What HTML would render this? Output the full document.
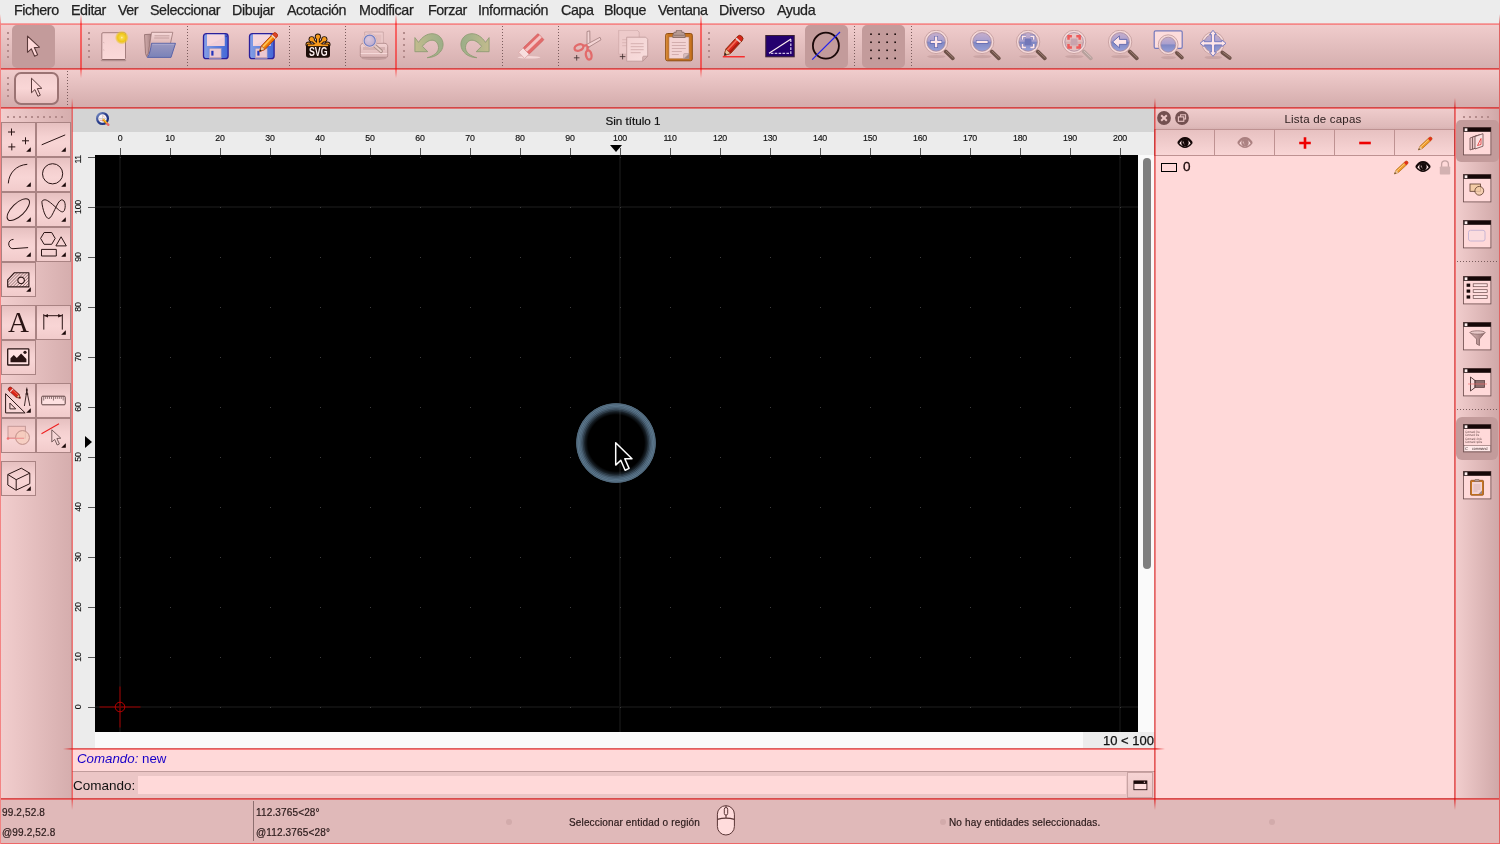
<!DOCTYPE html><html lang="es"><head><meta charset="utf-8"><title>Sin título 1 - QCAD</title><style>
*{box-sizing:border-box;margin:0;padding:0}
html,body{width:1500px;height:844px;overflow:hidden;background:#ececec;font-family:"Liberation Sans",sans-serif;color:#000}
.abs,.abs>*{position:absolute}
#root{position:relative;width:1500px;height:844px;overflow:hidden;will-change:transform}
#root div,#root span,#root svg{position:absolute}
.menu{top:0;left:0;width:1500px;height:24px;background:#ececec}
.menu span{top:2px;font-size:14.300px;line-height:16px;color:#222;white-space:nowrap;letter-spacing:-.42px;-webkit-text-stroke:.25px #222}
.tb1{left:0;top:24px;width:1500px;height:45px;background:linear-gradient(#f1cdcd,#d4aeae)}
.tb2{left:0;top:69px;width:1500px;height:39px;background:linear-gradient(#f1cdcd,#d3abab)}
.ltb{left:0;top:108px;width:72px;height:690px;background:linear-gradient(90deg,#f2cece,#d5adad)}
.rtb{left:1455px;top:108px;width:45px;height:690px;background:linear-gradient(90deg,#f2cece,#cfa7a7)}
.status{left:0;top:798px;width:1500px;height:46px;background:#e0b9b9}
.status span{font-size:10px;line-height:12px;color:#2a1a1a;white-space:nowrap;letter-spacing:.15px;-webkit-text-stroke:.2px #2a1a1a}
.hl{background:#ff0000;opacity:.5;height:2px}
.vl{background:#ff0000;opacity:.5;width:2px}
.pressed{background:#c39b9b;border-radius:5px}
.sepv{width:1px;background-image:linear-gradient(#7a5c5c 1px,transparent 1px);background-size:1px 3px}
.seph{height:1px;background-image:linear-gradient(90deg,#7a5c5c 1px,transparent 1px);background-size:3px 1px}
.grip{width:2px;background-image:linear-gradient(#b38b8b 2px,transparent 2px);background-size:2px 6px}
.griph{height:2px;background-image:linear-gradient(90deg,#b38b8b 2px,transparent 2px);background-size:6px 2px}
.cadbtn{width:35px;height:35px;border:.9px solid #a98383;background:linear-gradient(#e6c0c0,#f5d1d1 40%,#f8d5d5 60%,#f1cbcb);}
.tri{width:4.600px;height:4.600px;background:#1a0808;clip-path:polygon(100% 0,100% 100%,0 100%)}
.doc{left:72px;top:108px;width:1083px;height:640px;background:#fafafa}
.tabbar{left:0;top:0;width:1083px;height:24px;background:#d4d4d4}
.hruler{left:0;top:24px;width:1083px;height:23px;background:#ececec}
.vruler{left:0;top:47px;width:23px;height:593px;background:#ececec;overflow:hidden}
.canvas{left:23px;top:47px;width:1043px;height:577px;background:#000;overflow:hidden}
.rl{font-size:9.400px;color:#111;white-space:nowrap;line-height:12px;letter-spacing:-.3px;transform:scaleX(.94);-webkit-text-stroke:.15px #111}
.cmdhist{left:72px;top:749px;width:1083px;height:22px;background:#ffd9d9}
.cmdline{left:72px;top:771px;width:1083px;height:27px;background:#ebc6c6}
.lay{left:1156px;top:108px;width:298px;height:690px;background:#ffd9d9}
.laytitle{left:0;top:0;width:298px;height:22px;background:linear-gradient(#f0cdcd,#deb9b9 85%,#d4afaf)}
.laybtn{top:20.600px;height:27.900px;width:60.600px;border:1.300px solid #be9292;background:linear-gradient(#e7c1c1,#f9d6d6)}
.rbtn{left:8px;width:29px;height:29px}
</style></head><body><div id="root">
<div class="menu">
<span style="left:14px">Fichero</span>
<span style="left:71px">Editar</span>
<span style="left:118px">Ver</span>
<span style="left:150px">Seleccionar</span>
<span style="left:232px">Dibujar</span>
<span style="left:287px">Acotación</span>
<span style="left:359px">Modificar</span>
<span style="left:428px">Forzar</span>
<span style="left:478px">Información</span>
<span style="left:561px">Capa</span>
<span style="left:604px">Bloque</span>
<span style="left:658px">Ventana</span>
<span style="left:719px">Diverso</span>
<span style="left:777px">Ayuda</span>
</div>
<div class="tb1">
<div class="grip" style="left:7px;top:8px;height:28px"></div>
<div class="pressed" style="left:12px;top:1px;width:43px;height:43px"></div>
<div class="grip" style="left:88px;top:8px;height:28px"></div>
<div class="grip" style="left:403px;top:8px;height:28px"></div>
<div class="grip" style="left:708px;top:8px;height:28px"></div>
<div class="sepv" style="left:187px;top:2px;height:41px"></div>
<div class="sepv" style="left:289px;top:2px;height:41px"></div>
<div class="sepv" style="left:345px;top:2px;height:41px"></div>
<div class="sepv" style="left:502px;top:2px;height:41px"></div>
<div class="sepv" style="left:558px;top:2px;height:41px"></div>
<div class="sepv" style="left:854px;top:2px;height:41px"></div>
<div class="sepv" style="left:911px;top:2px;height:41px"></div>
<div class="pressed" style="left:805px;top:1px;width:43px;height:43px"></div>
<div class="pressed" style="left:862px;top:1px;width:43px;height:43px"></div>
<svg style="left:17.0px;top:6.0px" width="32" height="32" viewBox="0 0 32 32"><path d="M10.5 6.2V22.3L14.3 18.8L17.6 26.2L20.6 24.8L17.3 17.6L22.4 17.2Z" fill="#ffd9d9" stroke="#5a3a3a" stroke-width="1.1" stroke-linejoin="round"/></svg>
<svg style="left:97.0px;top:6.0px" width="32" height="32" viewBox="0 0 32 32"><defs><radialGradient id="gy"><stop offset="0" stop-color="#fff3c8"/><stop offset=".18" stop-color="#f7d84a"/><stop offset=".6" stop-color="#efc618"/><stop offset=".8" stop-color="#ecc428" stop-opacity=".6"/><stop offset="1" stop-color="#e8c83a" stop-opacity="0"/></radialGradient><linearGradient id="gpg" x1="0" y1="0" x2="0" y2="1"><stop offset="0" stop-color="#f3cfcf"/><stop offset="1" stop-color="#fbd9d9"/></linearGradient></defs><path d="M4.500 30.500h24" stroke="#9c7a7a" stroke-width="1.500" opacity=".55" stroke-linecap="round"/><rect x="4.800" y="2.700" width="23.700" height="27" rx="1.200" fill="url(#gpg)" stroke="#a57f7f" stroke-width="1"/><path d="M5.300 29.500h22.700" stroke="#8c6868" stroke-width="1"/><path d="M6.300 12.400l1 .4M6.300 19.800l1 .4" stroke="#c7a3a3" stroke-width=".7"/><circle cx="24.800" cy="7.600" r="7" fill="url(#gy)"/></svg>
<svg style="left:144.0px;top:6.0px" width="32" height="32" viewBox="0 0 32 32"><defs><linearGradient id="gfo" x1="0" y1="0" x2="0" y2="1"><stop offset="0" stop-color="#9b98c0"/><stop offset="1" stop-color="#7a82b8"/></linearGradient><linearGradient id="gfp" x1="0" y1="0" x2="0" y2="1"><stop offset="0" stop-color="#f7d9d9"/><stop offset=".45" stop-color="#e2bcbc"/><stop offset="1" stop-color="#bf9797"/></linearGradient><linearGradient id="gfb" x1="0" y1="0" x2="1" y2="0"><stop offset="0" stop-color="#d2acac"/><stop offset="1" stop-color="#a98484"/></linearGradient></defs><path d="M.5 4.600l6.500-.4-2.300 18.500-2 3.800-1.200-3z" fill="url(#gfb)" stroke="#8e6a6a" stroke-width=".8" stroke-linejoin="round"/><path d="M7.600 2.300h21.200l-2.400 11.500-22 9z" fill="url(#gfp)" stroke="#9c7676" stroke-width=".8" stroke-linejoin="round"/><path d="M10.500 5.800h15M10.200 8h15" stroke="#c49e9e" stroke-width="1"/><path d="M7.500 13.300h24l-4.500 14.100h-23.700c2.500-3 3.500-9 4.200-14.100z" fill="url(#gfo)" stroke="#5c65a8" stroke-width="1" stroke-linejoin="round"/><path d="M8.300 14.300h22" stroke="#b3b2d6" stroke-width=".7"/></svg>
<svg style="left:200.0px;top:6.0px" width="32" height="32" viewBox="0 0 32 32"><defs><linearGradient id="gfl" x1="0" y1="0" x2="1" y2="0"><stop offset="0" stop-color="#86a0e6"/><stop offset=".5" stop-color="#5f80dd"/><stop offset="1" stop-color="#4568d6"/></linearGradient></defs><rect x="3.500" y="3.700" width="24.600" height="25" rx="2.800" fill="url(#gfl)" stroke="#2b1f9a" stroke-width="1.300"/><rect x="7" y="4.400" width="17.600" height="11.600" fill="#f6d6dc"/><path d="M7 16l17.600-9v9z" fill="#ecc8d6" opacity=".6"/><rect x="9.200" y="18.300" width="12" height="10" fill="#ecc8d0" stroke="#8a8fc4" stroke-width=".6"/><path d="M9.200 27.600h12" stroke="#c9a4b4" stroke-width="1.200"/><rect x="11.300" y="20.800" width="2.200" height="4.800" fill="#2233bb"/><rect x="25.600" y="5.600" width="1.200" height="1.500" fill="#35309a"/></svg>
<svg style="left:246.0px;top:6.0px" width="32" height="32" viewBox="0 0 32 32"><defs><linearGradient id="gfl" x1="0" y1="0" x2="1" y2="0"><stop offset="0" stop-color="#86a0e6"/><stop offset=".5" stop-color="#5f80dd"/><stop offset="1" stop-color="#4568d6"/></linearGradient></defs><rect x="3.500" y="3.700" width="24.600" height="25" rx="2.800" fill="url(#gfl)" stroke="#2b1f9a" stroke-width="1.300"/><rect x="7" y="4.400" width="17.600" height="11.600" fill="#f6d6dc"/><path d="M7 16l17.600-9v9z" fill="#ecc8d6" opacity=".6"/><rect x="9.200" y="18.300" width="12" height="10" fill="#ecc8d0" stroke="#8a8fc4" stroke-width=".6"/><path d="M9.200 27.600h12" stroke="#c9a4b4" stroke-width="1.200"/><rect x="11.300" y="20.800" width="2.200" height="4.800" fill="#2233bb"/><rect x="25.600" y="5.600" width="1.200" height="1.500" fill="#35309a"/><g transform="translate(13.500,21.600) rotate(-46.500)"><path d="M0 0l5.500-2.500h16.800a2.500 2.500 0 0 1 0 5h-16.800z" fill="#f58a0c" stroke="#b0400c" stroke-width=".9" stroke-linejoin="round"/><path d="M5.500-.900h15" stroke="#ffc860" stroke-width="1.400"/><path d="M5.500 1.500h15" stroke="#e06a08" stroke-width="1"/><path d="M20.500-2.500v5" stroke="#edd0d0" stroke-width="1.500"/><path d="M21.600-2.500h.9a2.500 2.500 0 0 1 0 5h-.9z" fill="#e0442a" stroke="#b0300c" stroke-width=".6"/><path d="M0 0l5.500-2.500v5z" fill="#ecc8a0" stroke="#b0400c" stroke-width=".6"/><path d="M0 0l2.200-1v2z" fill="#222"/></g></svg>
<svg style="left:302.0px;top:6.0px" width="32" height="32" viewBox="0 0 32 32"><g stroke-linecap="round" fill="none"><path d="M16 15.500L15.900 6.800M16 15.500L9.800 9.400M16 15.500L22.200 9.400M16 15.500H6.800M16 15.500H25.200" stroke="#201008" stroke-width="3.700"/><circle cx="15.9" cy="6.7" r="3.100" fill="#201008"/><circle cx="9.7" cy="9.3" r="3.100" fill="#201008"/><circle cx="22.3" cy="9.3" r="3.100" fill="#201008"/><circle cx="6.6" cy="14.6" r="3.100" fill="#201008"/><circle cx="25.4" cy="14.6" r="3.100" fill="#201008"/><path d="M16 15.500L15.900 6.800M16 15.500L9.800 9.400M16 15.500L22.200 9.400M16 15.500H6.800M16 15.500H25.200" stroke="#f79a1e" stroke-width="1.900"/><circle cx="15.9" cy="6.7" r="2.200" fill="#f79a1e"/><circle cx="9.7" cy="9.3" r="2.200" fill="#f79a1e"/><circle cx="22.3" cy="9.3" r="2.200" fill="#f79a1e"/><circle cx="6.6" cy="14.6" r="2.200" fill="#f79a1e"/><circle cx="25.4" cy="14.6" r="2.200" fill="#f79a1e"/></g><rect x="4" y="13.700" width="24" height="14.100" rx="2.800" fill="#1c0c08"/><path d="M5.800 15.300h20.400" stroke="#f79a1e" stroke-width="1.700"/><path d="M11 15.500l5-3.500 5 3.500z" fill="#f79a1e"/><g opacity=".995"><text x="16.200" y="26" text-anchor="middle" font-family="Liberation Sans, sans-serif" font-weight="700" font-size="12.800" fill="#fff2f2" textLength="18.600" lengthAdjust="spacingAndGlyphs">SVG</text></g></svg>
<svg style="left:358.0px;top:6.0px" width="32" height="32" viewBox="0 0 32 32"><defs><linearGradient id="gpr" x1="0" y1="0" x2="0" y2="1"><stop offset="0" stop-color="#f3d3d3"/><stop offset="1" stop-color="#dbb4b4"/></linearGradient><radialGradient id="glens" cx=".4" cy=".35" r=".7"><stop offset="0" stop-color="#dcc8dc"/><stop offset="1" stop-color="#bcaacc"/></radialGradient></defs><ellipse cx="16" cy="28.300" rx="12.500" ry="1.800" fill="#a07a7a" opacity=".4"/><path d="M6.700 2h18.600v13h-18.600z" fill="#efcdcd" stroke="#c7a2a2" stroke-width=".8"/><path d="M15.500 4.500h8v8h-8z" fill="#e3bebe"/><path d="M2.300 16.500c0-1.500 1-3 2.700-3.200h22c1.700.2 2.700 1.700 2.700 3.200v9.300a1.500 1.500 0 0 1-1.500 1.500h-24.400a1.500 1.500 0 0 1-1.500-1.500z" fill="url(#gpr)" stroke="#b08a8a" stroke-width=".9"/><path d="M5 17h22v3h-22z" fill="#d2acac" opacity=".8"/><path d="M2.800 23.500h26.400" stroke="#f7dcdc" stroke-width=".9"/><path d="M16.200 15.200l6.800 6" stroke="#a88a84" stroke-width="3.800" stroke-linecap="round"/><path d="M16.200 15.200l6.800 6" stroke="#e6cbc6" stroke-width="2" stroke-linecap="round"/><circle cx="11.700" cy="10.700" r="7.200" fill="#f0d3d3" stroke="#d3aeae" stroke-width=".7"/><circle cx="11.700" cy="10.700" r="5.600" fill="url(#glens)" stroke="#6f7fc4" stroke-width="1.100"/></svg>
<svg style="left:413.0px;top:6.0px" width="32" height="32" viewBox="0 0 32 32"><defs><linearGradient id="gun" x1="0" y1="0" x2="1" y2="0"><stop offset="0" stop-color="#c3bb8d"/><stop offset=".6" stop-color="#a9b38a"/><stop offset="1" stop-color="#9cae88"/></linearGradient></defs><path d="M1.900 7.600L5.500 12.400C9 7 14 3.700 19 3.700C26 3.700 30.300 9 30.100 14.800C29.800 22 23 27.500 14.200 27.700C21 26 25.700 22 25.500 17.500C25.300 12.500 22 10.200 19 10.200C15.500 10.200 12 13 9.400 16.300L14.800 21.700H1.900Z" fill="url(#gun)" stroke="#8f9c74" stroke-width=".9" stroke-linejoin="round"/></svg>
<svg style="left:459.0px;top:6.0px" width="32" height="32" viewBox="0 0 32 32"><g transform="translate(32,0) scale(-1,1)"><defs><linearGradient id="gun" x1="0" y1="0" x2="1" y2="0"><stop offset="0" stop-color="#c3bb8d"/><stop offset=".6" stop-color="#a9b38a"/><stop offset="1" stop-color="#9cae88"/></linearGradient></defs><path d="M1.900 7.600L5.500 12.400C9 7 14 3.700 19 3.700C26 3.700 30.300 9 30.100 14.800C29.800 22 23 27.500 14.200 27.700C21 26 25.700 22 25.500 17.500C25.300 12.500 22 10.200 19 10.200C15.500 10.200 12 13 9.400 16.300L14.800 21.700H1.900Z" fill="url(#gun)" stroke="#8f9c74" stroke-width=".9" stroke-linejoin="round"/></g></svg>
<svg style="left:515.0px;top:6.0px" width="32" height="32" viewBox="0 0 32 32"><g transform="translate(0,-2)"><ellipse cx="14" cy="29.300" rx="11.500" ry="1.300" fill="#f6dada" opacity=".9"/><g transform="translate(3.600,24.300) rotate(-44)"><rect x="0" y="0" width="6.500" height="8.600" fill="#f7dede" stroke="#d9a3a3" stroke-width=".7"/><rect x="6.500" y="0" width="20.500" height="8.600" rx=".8" fill="#e26b6b" stroke="#d25c5c" stroke-width=".7"/><rect x="6.500" y="2.400" width="20.500" height="3" fill="#f4c3c3"/></g></g></svg>
<svg style="left:570.0px;top:6.0px" width="34" height="34" viewBox="0 0 34 34"><g transform="translate(1.500,-2)"><g fill="#f3d3d3" stroke="#a98686" stroke-width=".9" stroke-linejoin="round"><path d="M15.500 3.500l2.800-.6.200 15.500-3 2.200z"/><path d="M28.500 9.300l1 2.500-12.500 7.500-2.200-2.700z"/></g><g fill="none" stroke="#e26b6b" stroke-width="2.300"><ellipse cx="7.500" cy="19.500" rx="4.600" ry="3" transform="rotate(-22 7.500 19.500)"/><ellipse cx="17.200" cy="27" rx="2.800" ry="4.600" transform="rotate(-12 17.200 27)"/><path d="M11.500 17.800l4.500-.6M15.800 22.500l.6-4.500"/></g></g><path d="M3.900 27.800h5.600M6.700 25v5.600" stroke="#3a2828" stroke-width=".8"/></svg>
<svg style="left:617.0px;top:6.0px" width="34" height="34" viewBox="0 0 34 34"><g transform="translate(-.8,-1.300)"><defs><linearGradient id="gcp" x1="0" y1="0" x2="1" y2="1"><stop offset="0" stop-color="#f3d2d2"/><stop offset="1" stop-color="#f8dddd"/></linearGradient></defs><path d="M2.500 1.500h18.500l2 2v22h-20.500z" fill="#edcaca" stroke="#cfaaaa" stroke-width=".8"/><path d="M6 11h8M6 14h8M6 17h6" stroke="#d5b0b0" stroke-width=".8"/><path d="M10.500 8.500h19l2 2v17l-5 5h-16z" fill="url(#gcp)" stroke="#c29d9d" stroke-width=".9" stroke-linejoin="round"/><path d="M31.500 27.500l-5 5v-4a1 1 0 0 1 1-1z" fill="#d9b6b6" stroke="#b79090" stroke-width=".7"/><path d="M14.500 15h13M14.500 18h13M14.500 21h13M14.500 24h10" stroke="#d3adad" stroke-width=".9"/></g><path d="M2.800 26.600h5.600M5.600 23.800v5.600" stroke="#3a2828" stroke-width=".8"/></svg>
<svg style="left:663.0px;top:6.0px" width="32" height="34" viewBox="0 0 32 34"><g transform="translate(0,-1)"><rect x="2.700" y="4.500" width="26.600" height="27.300" rx="1.800" fill="#c9741f" stroke="#8d4d12" stroke-width="1"/><path d="M3.800 5.600v25.200" stroke="#e39a4a" stroke-width=".9"/><path d="M5.800 7.800h20.400v22h-20.400z" fill="#f3d3d3" stroke="#a4622a" stroke-width=".6"/><path d="M8.800 13.500h14M8.800 16.500h14M8.800 19.500h14M8.800 22.500h10M8.800 25.500h7" stroke="#cfa8a8" stroke-width=".9"/><path d="M26.200 24.500v5.300h-5.600z" fill="#9d8686"/><path d="M20.600 29.800l5.600-5.300h-4.600a1 1 0 0 0-1 1z" fill="#d8bcbc" stroke="#a98c8c" stroke-width=".5"/><path d="M9.800 6.300l1.200-3h2.200v-1.300a.8.800 0 0 1 .8-.8h4a.8.800 0 0 1 .8.800v1.300h2.200l1.200 3v2.200h-12.400z" fill="#b79a92" stroke="#7d625c" stroke-width=".8"/><path d="M10.500 6.300h11" stroke="#8b6f68" stroke-width=".8"/></g></svg>
<svg style="left:718.0px;top:6.0px" width="32" height="32" viewBox="0 0 32 32"><path d="M4.800 26.800h22" stroke="#ff0000" stroke-width="1.100"/><g transform="translate(6.300,25.500) rotate(-47.500)"><path d="M0 0l5.800-3.200h17a3.200 3.200 0 0 1 0 6.400h-17z" fill="#d8261c" stroke="#8a2a0c" stroke-width=".9" stroke-linejoin="round"/><path d="M5.800-1.300h15.500" stroke="#f4705a" stroke-width="1.500"/><path d="M5.800 1.900h15.500" stroke="#a81a10" stroke-width="1.300"/><path d="M20.600-3.200v6.400" stroke="#e8d2d2" stroke-width="1.700"/><path d="M0 0l5.800-3.200v6.400z" fill="#e8c39a" stroke="#8a3a1c" stroke-width=".6"/><path d="M0 0l2.400-1.300v2.600z" fill="#222"/></g></svg>
<svg style="left:764.0px;top:6.0px" width="32" height="32" viewBox="0 0 32 32"><rect x="1.800" y="5.500" width="28.400" height="21.300" fill="#24006e" stroke="#3a2030" stroke-width="1"/><path d="M26.800 9.500v13.800h-21.500" fill="none" stroke="#cdbfe6" stroke-width="1.300" stroke-dasharray="2.600 1.300"/><path d="M5 23.300l22-14.300" stroke="#fff0f0" stroke-width="1.100"/></svg>
<svg style="left:810.0px;top:6.0px" width="32" height="32" viewBox="0 0 32 32"><circle cx="15.900" cy="15.700" r="13" fill="none" stroke="#1a0808" stroke-width="1.800"/><path d="M2.200 29.600l27.800-27.600" stroke="#2222ee" stroke-width="1.200"/></svg>
<svg style="left:866.0px;top:6.0px" width="32" height="32" viewBox="0 0 32 32"><rect x="4.20" y="3.40" width="1.600" height="1.600" fill="#160808"/><rect x="4.20" y="11.45" width="1.600" height="1.600" fill="#160808"/><rect x="4.20" y="19.50" width="1.600" height="1.600" fill="#160808"/><rect x="4.20" y="27.55" width="1.600" height="1.600" fill="#160808"/><rect x="12.25" y="3.40" width="1.600" height="1.600" fill="#160808"/><rect x="12.25" y="11.45" width="1.600" height="1.600" fill="#160808"/><rect x="12.25" y="19.50" width="1.600" height="1.600" fill="#160808"/><rect x="12.25" y="27.55" width="1.600" height="1.600" fill="#160808"/><rect x="20.30" y="3.40" width="1.600" height="1.600" fill="#160808"/><rect x="20.30" y="11.45" width="1.600" height="1.600" fill="#160808"/><rect x="20.30" y="19.50" width="1.600" height="1.600" fill="#160808"/><rect x="20.30" y="27.55" width="1.600" height="1.600" fill="#160808"/><rect x="28.35" y="3.40" width="1.600" height="1.600" fill="#160808"/><rect x="28.35" y="11.45" width="1.600" height="1.600" fill="#160808"/><rect x="28.35" y="19.50" width="1.600" height="1.600" fill="#160808"/><rect x="28.35" y="27.55" width="1.600" height="1.600" fill="#160808"/></svg>
<svg style="left:923.0px;top:6.0px" width="32" height="32" viewBox="0 0 32 32"><defs><linearGradient id="glz" x1="0" y1="0" x2="0" y2="1"><stop offset="0" stop-color="#c6aecb"/><stop offset=".47" stop-color="#a99fce"/><stop offset=".5" stop-color="#7f86c2"/><stop offset="1" stop-color="#98a0d8"/></linearGradient><linearGradient id="glr" x1="0" y1="0" x2="0" y2="1"><stop offset="0" stop-color="#eccaca"/><stop offset=".47" stop-color="#e4bebe"/><stop offset=".5" stop-color="#d6b0b0"/><stop offset="1" stop-color="#e6c2c2"/></linearGradient></defs><ellipse cx="13.4" cy="26.6" rx="9.3" ry="1.600" fill="#9a7575" opacity=".26"/><path d="M20.3 19.2L29.8 28.3" stroke="#6d5148" stroke-width="1.600"/><path d="M22.6 21.4L29.8 28.3" stroke="#6d5148" stroke-width="3.700" stroke-linecap="round"/><path d="M23.2 21.3L30.1 27.8" stroke="#9a7a6e" stroke-width="1" stroke-linecap="round"/><circle cx="13.1" cy="11.9" r="9.3" fill="url(#glz)"/><circle cx="13.1" cy="11.9" r="10.5" fill="none" stroke="#f4d8d8" stroke-width="2.300"/><circle cx="13.1" cy="11.9" r="11.700000000000001" fill="none" stroke="#c09898" stroke-width=".8"/><circle cx="13.1" cy="11.9" r="9.3" fill="none" stroke="#a5889c" stroke-width=".8"/><path d="M13.100 5.900v12M7.100 11.900h12" stroke="#5e64ac" stroke-width="3.700"/><path d="M13.100 6.500v10.800M7.700 11.900h10.800" stroke="#ffe6e8" stroke-width="2.400"/></svg>
<svg style="left:969.0px;top:6.0px" width="32" height="32" viewBox="0 0 32 32"><defs><linearGradient id="glz" x1="0" y1="0" x2="0" y2="1"><stop offset="0" stop-color="#c6aecb"/><stop offset=".47" stop-color="#a99fce"/><stop offset=".5" stop-color="#7f86c2"/><stop offset="1" stop-color="#98a0d8"/></linearGradient><linearGradient id="glr" x1="0" y1="0" x2="0" y2="1"><stop offset="0" stop-color="#eccaca"/><stop offset=".47" stop-color="#e4bebe"/><stop offset=".5" stop-color="#d6b0b0"/><stop offset="1" stop-color="#e6c2c2"/></linearGradient></defs><ellipse cx="13.4" cy="26.6" rx="9.3" ry="1.600" fill="#9a7575" opacity=".26"/><path d="M20.3 19.2L29.8 28.3" stroke="#6d5148" stroke-width="1.600"/><path d="M22.6 21.4L29.8 28.3" stroke="#6d5148" stroke-width="3.700" stroke-linecap="round"/><path d="M23.2 21.3L30.1 27.8" stroke="#9a7a6e" stroke-width="1" stroke-linecap="round"/><circle cx="13.1" cy="11.9" r="9.3" fill="url(#glz)"/><circle cx="13.1" cy="11.9" r="10.5" fill="none" stroke="#f4d8d8" stroke-width="2.300"/><circle cx="13.1" cy="11.9" r="11.700000000000001" fill="none" stroke="#c09898" stroke-width=".8"/><circle cx="13.1" cy="11.9" r="9.3" fill="none" stroke="#a5889c" stroke-width=".8"/><path d="M6.900 11.900h12.400" stroke="#5e64ac" stroke-width="3.500"/><path d="M7.500 11.900h11.200" stroke="#ffe6e8" stroke-width="2.200"/></svg>
<svg style="left:1015.0px;top:6.0px" width="32" height="32" viewBox="0 0 32 32"><defs><linearGradient id="glz" x1="0" y1="0" x2="0" y2="1"><stop offset="0" stop-color="#c6aecb"/><stop offset=".47" stop-color="#a99fce"/><stop offset=".5" stop-color="#7f86c2"/><stop offset="1" stop-color="#98a0d8"/></linearGradient><linearGradient id="glr" x1="0" y1="0" x2="0" y2="1"><stop offset="0" stop-color="#eccaca"/><stop offset=".47" stop-color="#e4bebe"/><stop offset=".5" stop-color="#d6b0b0"/><stop offset="1" stop-color="#e6c2c2"/></linearGradient></defs><ellipse cx="13.4" cy="26.6" rx="9.3" ry="1.600" fill="#9a7575" opacity=".26"/><path d="M20.3 19.2L29.8 28.3" stroke="#6d5148" stroke-width="1.600"/><path d="M22.6 21.4L29.8 28.3" stroke="#6d5148" stroke-width="3.700" stroke-linecap="round"/><path d="M23.2 21.3L30.1 27.8" stroke="#9a7a6e" stroke-width="1" stroke-linecap="round"/><circle cx="13.1" cy="11.9" r="9.3" fill="url(#glz)"/><circle cx="13.1" cy="11.9" r="10.5" fill="none" stroke="#f4d8d8" stroke-width="2.300"/><circle cx="13.1" cy="11.9" r="11.700000000000001" fill="none" stroke="#c09898" stroke-width=".8"/><circle cx="13.1" cy="11.9" r="9.3" fill="none" stroke="#a5889c" stroke-width=".8"/><rect x="9.700" y="8.500" width="6.800" height="6.800" fill="#7277b8"/><g fill="none" stroke="#5e64ac" stroke-width="3.0"><path d="M7.5 9.700000000000001V6.300000000000001H10.9M15.299999999999999 6.300000000000001H18.7V9.700000000000001M18.7 14.1V17.5H15.299999999999999M10.9 17.5H7.5V14.1"/></g><g fill="none" stroke="#ffe6e8" stroke-width="1.8"><path d="M7.5 9.700000000000001V6.300000000000001H10.9M15.299999999999999 6.300000000000001H18.7V9.700000000000001M18.7 14.1V17.5H15.299999999999999M10.9 17.5H7.5V14.1"/></g></svg>
<svg style="left:1061.0px;top:6.0px" width="32" height="32" viewBox="0 0 32 32"><defs><linearGradient id="glz" x1="0" y1="0" x2="0" y2="1"><stop offset="0" stop-color="#c6aecb"/><stop offset=".47" stop-color="#a99fce"/><stop offset=".5" stop-color="#7f86c2"/><stop offset="1" stop-color="#98a0d8"/></linearGradient><linearGradient id="glr" x1="0" y1="0" x2="0" y2="1"><stop offset="0" stop-color="#eccaca"/><stop offset=".47" stop-color="#e4bebe"/><stop offset=".5" stop-color="#d6b0b0"/><stop offset="1" stop-color="#e6c2c2"/></linearGradient></defs><ellipse cx="13.4" cy="26.6" rx="9.3" ry="1.600" fill="#9a7575" opacity=".26"/><path d="M20.3 19.2L29.8 28.3" stroke="#b7a09c" stroke-width="1.600"/><path d="M22.6 21.4L29.8 28.3" stroke="#b7a09c" stroke-width="3.700" stroke-linecap="round"/><path d="M23.2 21.3L30.1 27.8" stroke="#d4c0bc" stroke-width="1" stroke-linecap="round"/><circle cx="13.1" cy="11.9" r="9.3" fill="url(#glr)"/><circle cx="13.1" cy="11.9" r="10.5" fill="none" stroke="#f4d8d8" stroke-width="2.300"/><circle cx="13.1" cy="11.9" r="11.700000000000001" fill="none" stroke="#c09898" stroke-width=".8"/><circle cx="13.1" cy="11.9" r="9.3" fill="none" stroke="#a5889c" stroke-width=".8"/><rect x="9.700" y="8.500" width="6.800" height="6.800" fill="#c8a4ae"/><g fill="none" stroke="#ee5a5a" stroke-width="2.5"><path d="M7.5 9.700000000000001V6.300000000000001H10.9M15.299999999999999 6.300000000000001H18.7V9.700000000000001M18.7 14.1V17.5H15.299999999999999M10.9 17.5H7.5V14.1"/></g></svg>
<svg style="left:1107.0px;top:6.0px" width="32" height="32" viewBox="0 0 32 32"><defs><linearGradient id="glz" x1="0" y1="0" x2="0" y2="1"><stop offset="0" stop-color="#c6aecb"/><stop offset=".47" stop-color="#a99fce"/><stop offset=".5" stop-color="#7f86c2"/><stop offset="1" stop-color="#98a0d8"/></linearGradient><linearGradient id="glr" x1="0" y1="0" x2="0" y2="1"><stop offset="0" stop-color="#eccaca"/><stop offset=".47" stop-color="#e4bebe"/><stop offset=".5" stop-color="#d6b0b0"/><stop offset="1" stop-color="#e6c2c2"/></linearGradient></defs><ellipse cx="13.4" cy="26.6" rx="9.3" ry="1.600" fill="#9a7575" opacity=".26"/><path d="M20.3 19.2L29.8 28.3" stroke="#6d5148" stroke-width="1.600"/><path d="M22.6 21.4L29.8 28.3" stroke="#6d5148" stroke-width="3.700" stroke-linecap="round"/><path d="M23.2 21.3L30.1 27.8" stroke="#9a7a6e" stroke-width="1" stroke-linecap="round"/><circle cx="13.1" cy="11.9" r="9.3" fill="url(#glz)"/><circle cx="13.1" cy="11.9" r="10.5" fill="none" stroke="#f4d8d8" stroke-width="2.300"/><circle cx="13.1" cy="11.9" r="11.700000000000001" fill="none" stroke="#c09898" stroke-width=".8"/><circle cx="13.1" cy="11.9" r="9.3" fill="none" stroke="#a5889c" stroke-width=".8"/><path d="M5.600 11.900l6.800-6v3.500h7.400v5h-7.400v3.500z" fill="#ffe6e8" stroke="#5e64ac" stroke-width=".9" stroke-linejoin="round"/></svg>
<svg style="left:1153.0px;top:6.0px" width="34" height="32" viewBox="0 0 34 32"><rect x="1.200" y=".8" width="28" height="17.600" rx="1.400" fill="#fcdcdc" stroke="#7479bc" stroke-width="1.200"/><defs><linearGradient id="glz" x1="0" y1="0" x2="0" y2="1"><stop offset="0" stop-color="#c6aecb"/><stop offset=".47" stop-color="#a99fce"/><stop offset=".5" stop-color="#7f86c2"/><stop offset="1" stop-color="#98a0d8"/></linearGradient><linearGradient id="glr" x1="0" y1="0" x2="0" y2="1"><stop offset="0" stop-color="#eccaca"/><stop offset=".47" stop-color="#e4bebe"/><stop offset=".5" stop-color="#d6b0b0"/><stop offset="1" stop-color="#e6c2c2"/></linearGradient></defs><ellipse cx="15.5" cy="27.6" rx="7.5" ry="1.600" fill="#9a7575" opacity=".26"/><path d="M21.7 20.9L28.9 27.6" stroke="#6d5148" stroke-width="1.600"/><path d="M24.0 23.099999999999998L28.9 27.6" stroke="#6d5148" stroke-width="3.700" stroke-linecap="round"/><path d="M24.599999999999998 23.0L29.2 27.1" stroke="#9a7a6e" stroke-width="1" stroke-linecap="round"/><circle cx="15.2" cy="14.7" r="7.5" fill="url(#glz)"/><circle cx="15.2" cy="14.7" r="8.7" fill="none" stroke="#f4d8d8" stroke-width="2.300"/><circle cx="15.2" cy="14.7" r="9.9" fill="none" stroke="#c09898" stroke-width=".8"/><circle cx="15.2" cy="14.7" r="7.5" fill="none" stroke="#a5889c" stroke-width=".8"/></svg>
<svg style="left:1199.0px;top:6.0px" width="34" height="32" viewBox="0 0 34 32"><defs><linearGradient id="glz" x1="0" y1="0" x2="0" y2="1"><stop offset="0" stop-color="#c6aecb"/><stop offset=".47" stop-color="#a99fce"/><stop offset=".5" stop-color="#7f86c2"/><stop offset="1" stop-color="#98a0d8"/></linearGradient><linearGradient id="glr" x1="0" y1="0" x2="0" y2="1"><stop offset="0" stop-color="#eccaca"/><stop offset=".47" stop-color="#e4bebe"/><stop offset=".5" stop-color="#d6b0b0"/><stop offset="1" stop-color="#e6c2c2"/></linearGradient></defs><ellipse cx="14.3" cy="27.5" rx="8.8" ry="1.600" fill="#9a7575" opacity=".26"/><path d="M21 20.2L30.8 28" stroke="#6d5148" stroke-width="1.600"/><path d="M23.3 22.4L30.8 28" stroke="#6d5148" stroke-width="3.700" stroke-linecap="round"/><path d="M23.9 22.3L31.1 27.5" stroke="#9a7a6e" stroke-width="1" stroke-linecap="round"/><circle cx="14" cy="13.3" r="8.8" fill="url(#glz)"/><circle cx="14" cy="13.3" r="10.0" fill="none" stroke="#f4d8d8" stroke-width="2.300"/><circle cx="14" cy="13.3" r="11.200000000000001" fill="none" stroke="#c09898" stroke-width=".8"/><circle cx="14" cy="13.3" r="8.8" fill="none" stroke="#a5889c" stroke-width=".8"/><path d="M12.4 11.700000000000001V4.500000000000001H10.6L14 0.3000000000000007L17.4 4.500000000000001H15.6V11.700000000000001H22.8V9.9L27 13.3L22.8 16.7V14.9H15.6V22.1H17.4L14 26.3L10.6 22.1H12.4V14.9H5.2V16.7L1 13.3L5.2 9.9V11.700000000000001Z" fill="#ffe6e8" stroke="#6f76c0" stroke-width=".9" stroke-linejoin="round"/></svg>
</div>
<div class="tb2">
<div class="grip" style="left:7px;top:8px;height:22px"></div>
<div style="left:14px;top:3px;width:45px;height:33px;border:2px solid #9b7373;border-radius:7px;background:linear-gradient(#f3cfcf,#f9d6d6 50%,#e6bebe)"></div>
<svg style="left:24.0px;top:6.0px" width="26" height="26" viewBox="0 0 26 26"><path d="M7.5 3.2V17.8L10.9 14.6L13.9 21.3L16.3 20.2L13.3 13.6L17.8 13.3Z" fill="#ffd9d9" stroke="#5a3a3a" stroke-width="1" stroke-linejoin="round"/></svg>
<div class="sepv" style="left:67px;top:2px;height:35px"></div>
</div>
<div class="ltb">
<div class="griph" style="left:7px;top:8px;width:58px"></div>
<div class="cadbtn" style="left:1px;top:14px"></div>
<svg style="left:2.5px;top:15.5px" width="32" height="32" viewBox="0 0 32 32"><path d="M5 8h7M8.500 4.500v7M19 16.800h7M22.500 13.300v7M5.300 22.900h7M8.800 19.400v7" fill="none" stroke="#2a1414" stroke-width="1"/></svg>
<div class="tri" style="left:26.2px;top:39.2px"></div>
<div class="cadbtn" style="left:36px;top:14px"></div>
<svg style="left:37.5px;top:15.5px" width="32" height="32" viewBox="0 0 32 32"><path d="M3.700 20.800l23.500-9.900" fill="none" stroke="#2a1414" stroke-width="1.0"/></svg>
<div class="tri" style="left:61.2px;top:39.2px"></div>
<div class="cadbtn" style="left:1px;top:49px"></div>
<svg style="left:2.5px;top:50.5px" width="32" height="32" viewBox="0 0 32 32"><path d="M5.300 24.400c.6-10.500 8-18.300 19-19.100" fill="none" stroke="#2a1414" stroke-width="1.0"/></svg>
<div class="tri" style="left:26.2px;top:74.2px"></div>
<div class="cadbtn" style="left:36px;top:49px"></div>
<svg style="left:37.5px;top:50.5px" width="32" height="32" viewBox="0 0 32 32"><circle cx="14.600" cy="14.800" r="10.100" fill="none" stroke="#2a1414" stroke-width="1.0"/></svg>
<div class="tri" style="left:61.2px;top:74.2px"></div>
<div class="cadbtn" style="left:1px;top:84px"></div>
<svg style="left:2.5px;top:85.5px" width="32" height="32" viewBox="0 0 32 32"><ellipse cx="15.300" cy="15.600" rx="14.300" ry="6.300" transform="rotate(-44 15.300 15.600)" fill="none" stroke="#2a1414" stroke-width="1.0"/></svg>
<div class="tri" style="left:26.2px;top:109.2px"></div>
<div class="cadbtn" style="left:36px;top:84px"></div>
<svg style="left:37.5px;top:85.5px" width="32" height="32" viewBox="0 0 32 32"><path d="M3.900 8.200C4.500 15 7.500 24.500 10.700 24.500C14.500 24.500 19 6.500 23.500 5.900C27.500 5.400 28 13 26.300 16.500C24.500 20 21 16 17.900 13.400C13 9 8.500 5 6.100 5.900C4.500 6.300 3.800 7 3.900 8.200Z" fill="none" stroke="#2a1414" stroke-width="1.0"/></svg>
<div class="tri" style="left:61.2px;top:109.2px"></div>
<div class="cadbtn" style="left:1px;top:119px"></div>
<svg style="left:2.5px;top:120.5px" width="32" height="32" viewBox="0 0 32 32"><path d="M10.500 10.400C7.500 10.400 5.700 12.500 5.700 14.900C5.700 17.500 7.500 19.700 9.900 19.700L25.100 18.600" fill="none" stroke="#2a1414" stroke-width="1.0"/></svg>
<div class="tri" style="left:26.2px;top:144.2px"></div>
<div class="cadbtn" style="left:36px;top:119px"></div>
<svg style="left:37.5px;top:120.5px" width="32" height="32" viewBox="0 0 32 32"><path d="M2.600 9.400L6.100 3.500H13.700L17.200 9.400L13.700 15.300H6.100ZM23.100 7.800L28.300 16.900H17.900ZM3.500 20.400H18.300V27H3.500Z" fill="none" stroke="#2a1414" stroke-width="1.0" stroke-linejoin="round"/></svg>
<div class="tri" style="left:61.2px;top:144.2px"></div>
<div class="cadbtn" style="left:1px;top:154px"></div>
<svg style="left:2.5px;top:155.5px" width="32" height="32" viewBox="0 0 32 32"><defs><pattern id="ph" width="2.200" height="2.200" patternUnits="userSpaceOnUse" patternTransform="rotate(45)"><path d="M1.100 0v2.200" stroke="#5a4040" stroke-width=".45"/></pattern></defs><path d="M4.700 22.900V15.800L11.200 8.800H25.900V22.900ZM18.100 13.100a3.300 3.300 0 1 0 .01 0Z" fill="url(#ph)" fill-rule="evenodd" stroke="#2a1414" stroke-width="1.100" stroke-linejoin="round"/></svg>
<div class="tri" style="left:26.2px;top:179.2px"></div>
<div class="cadbtn" style="left:1px;top:197px"></div>
<svg style="left:2.5px;top:198.5px" width="32" height="32" viewBox="0 0 32 32"><text x="15.500" y="24.700" text-anchor="middle" font-family="Liberation Serif, serif" font-size="29" fill="#2a1414">A</text></svg>
<div class="cadbtn" style="left:36px;top:197px"></div>
<svg style="left:37.5px;top:198.5px" width="32" height="32" viewBox="0 0 32 32"><path d="M5.800 7.100v15.500M24.300 7.100v15.500M5.800 8.700h18.500" fill="none" stroke="#2a1414" stroke-width="1.0"/><path d="M6 8.700l4-1.700v3.400zM24.100 8.700l-4-1.700v3.400z" fill="#2a1414"/></svg>
<div class="tri" style="left:61.2px;top:222.2px"></div>
<div class="cadbtn" style="left:1px;top:232px"></div>
<svg style="left:2.5px;top:233.5px" width="32" height="32" viewBox="0 0 32 32"><rect x="4.700" y="6.900" width="21.100" height="16.100" rx=".6" fill="#ffe1e1" stroke="#2a1414" stroke-width="1.300"/><path d="M7.500 20.300v-4l3.300-3.300 3 3 4.300-4.400 5.300 5.500v3.200z" fill="#2a1414"/><circle cx="22" cy="10.300" r="1.600" fill="#2a1414"/></svg>
<div class="cadbtn" style="left:1px;top:275px"></div>
<svg style="left:2.5px;top:276.5px" width="32" height="32" viewBox="0 0 32 32"><path d="M2.600 8.700V27.900H22.100Z" fill="#f8d7d7" stroke="#2a1414" stroke-width="1" stroke-linejoin="round"/><path d="M6.900 18.100V23.900H12.700Z" fill="#f8d7d7" stroke="#2a1414" stroke-width=".9" stroke-linejoin="round"/><g transform="translate(7.300,4.200) rotate(42)"><path d="M0-2.100h9.800l3.600 2.100-3.600 2.100h-9.800a2.100 2.100 0 0 1 0-4.200z" fill="#dd2418" stroke="#7a150c" stroke-width=".7"/><path d="M9.800-2.100l3.600 2.100-3.600 2.100z" fill="#e8c39a" stroke="#7a150c" stroke-width=".5"/><path d="M11.900-.9l1.600.9-1.600.9z" fill="#222"/><path d="M1.700-2.100v4.200" stroke="#f2d0d0" stroke-width="1.100"/><path d="M3-.9h6.500" stroke="#f26a58" stroke-width=".9"/></g><path d="M23.800 2.600v3.200M23.800 5.800l-2.400 15.200M23.800 5.800l3.100 15.200M22.400 9h2.900" fill="none" stroke="#2a1414" stroke-width="0.9"/><circle cx="23.800" cy="5" r="1" fill="#2a1414"/></svg>
<div class="tri" style="left:26.2px;top:300.2px"></div>
<div class="cadbtn" style="left:36px;top:275px"></div>
<svg style="left:37.5px;top:276.5px" width="32" height="32" viewBox="0 0 32 32"><rect x="3.700" y="11.200" width="23.500" height="8.600" rx="1" fill="#fde0e0" stroke="#4a2e2e" stroke-width=".9"/><path d="M5.70 11.700v3.8" stroke="#4a2e2e" stroke-width=".6"/><path d="M7.65 11.700v2.2" stroke="#4a2e2e" stroke-width=".6"/><path d="M9.60 11.700v2.2" stroke="#4a2e2e" stroke-width=".6"/><path d="M11.55 11.700v2.2" stroke="#4a2e2e" stroke-width=".6"/><path d="M13.50 11.700v2.2" stroke="#4a2e2e" stroke-width=".6"/><path d="M15.45 11.700v3.8" stroke="#4a2e2e" stroke-width=".6"/><path d="M17.40 11.700v2.2" stroke="#4a2e2e" stroke-width=".6"/><path d="M19.35 11.700v2.2" stroke="#4a2e2e" stroke-width=".6"/><path d="M21.30 11.700v2.2" stroke="#4a2e2e" stroke-width=".6"/><path d="M23.25 11.700v2.2" stroke="#4a2e2e" stroke-width=".6"/><path d="M25.20 11.700v3.8" stroke="#4a2e2e" stroke-width=".6"/></svg>
<div class="cadbtn" style="left:1px;top:310px"></div>
<svg style="left:2.5px;top:311.5px" width="32" height="32" viewBox="0 0 32 32"><rect x="5" y="6.300" width="17.400" height="11.800" fill="#f5c6c0" stroke="#c49896" stroke-width="1"/><circle cx="19.500" cy="17.500" r="6.900" fill="#f6cdbe" fill-opacity=".75" stroke="#be8e88" stroke-width="1"/><path d="M5 18.300h16" stroke="#f09090" stroke-width="1"/><circle cx="5" cy="18.500" r="1.300" fill="#f07070"/></svg>
<div class="cadbtn" style="left:36px;top:310px"></div>
<svg style="left:37.5px;top:311.5px" width="32" height="32" viewBox="0 0 32 32"><path d="M3.500 13.800l17.500-10" stroke="#ee1c1c" stroke-width="1.100"/><path d="M13.800 9.800v12.200l2.900-2.600 2.500 5.600 2.200-1-2.500-5.500 3.900-.3z" fill="#f6d6d6" stroke="#6a5050" stroke-width=".9" stroke-linejoin="round"/></svg>
<div class="tri" style="left:61.2px;top:335.2px"></div>
<div class="cadbtn" style="left:1px;top:353px"></div>
<svg style="left:2.5px;top:354.5px" width="32" height="32" viewBox="0 0 32 32"><path d="M4.800 11.500l13.500-6.300 8.500 5v10.500l-13.800 6.500-8.200-5.200z M4.800 11.500l8.400 5.200 13.600-6.500 M13.200 16.700v10.500" fill="none" stroke="#2a1414" stroke-width="1.0" stroke-linejoin="round"/></svg>
<div class="tri" style="left:26.2px;top:378.2px"></div>
</div>
<div class="doc">
<div class="tabbar"><span style="left:0;width:1122px;text-align:center;top:6px;font-size:11.700px;line-height:13px;color:#111;-webkit-text-stroke:.2px #111">Sin título 1</span></div>
<svg style="left:22.6px;top:3.2px" width="16" height="16" viewBox="0 0 16 16"><defs><linearGradient id="gq" x1="0" y1="0" x2="1" y2="1"><stop offset="0" stop-color="#7f93c8"/><stop offset=".45" stop-color="#2a3f8c"/><stop offset="1" stop-color="#1c2f7c"/></linearGradient></defs><circle cx="7.500" cy="7.500" r="5.400" fill="#f6f2f4" stroke="url(#gq)" stroke-width="2.300"/><path d="M7.500 3.800v7.400M3.800 7.500h7.400" stroke="#b8b0b8" stroke-width=".5"/><path d="M4.500 9.300h4M8.300 5l1.200 1.200" stroke="#e07070" stroke-width=".6"/><path d="M7.900 8.200l4.600 4.800" stroke="#d98a10" stroke-width="2.200"/><path d="M8 7.900l4.400 4.600" stroke="#ffc21c" stroke-width="1"/><path d="M7.300 7.500l1.600.3-1.300 1.200z" fill="#f0d9a8"/><path d="M12.200 12.700l1.200 1.200" stroke="#e86a6a" stroke-width="2.300" stroke-linecap="round"/></svg>
<div class="hruler">
<span class="rl" style="left:28px;width:40px;text-align:center;top:0px">0</span>
<div style="left:47.5px;top:16px;width:1px;height:7px;background:#555"></div>
<span class="rl" style="left:78px;width:40px;text-align:center;top:0px">10</span>
<div style="left:97.5px;top:16px;width:1px;height:7px;background:#555"></div>
<span class="rl" style="left:128px;width:40px;text-align:center;top:0px">20</span>
<div style="left:147.5px;top:16px;width:1px;height:7px;background:#555"></div>
<span class="rl" style="left:178px;width:40px;text-align:center;top:0px">30</span>
<div style="left:197.5px;top:16px;width:1px;height:7px;background:#555"></div>
<span class="rl" style="left:228px;width:40px;text-align:center;top:0px">40</span>
<div style="left:247.5px;top:16px;width:1px;height:7px;background:#555"></div>
<span class="rl" style="left:278px;width:40px;text-align:center;top:0px">50</span>
<div style="left:297.5px;top:16px;width:1px;height:7px;background:#555"></div>
<span class="rl" style="left:328px;width:40px;text-align:center;top:0px">60</span>
<div style="left:347.5px;top:16px;width:1px;height:7px;background:#555"></div>
<span class="rl" style="left:378px;width:40px;text-align:center;top:0px">70</span>
<div style="left:397.5px;top:16px;width:1px;height:7px;background:#555"></div>
<span class="rl" style="left:428px;width:40px;text-align:center;top:0px">80</span>
<div style="left:447.5px;top:16px;width:1px;height:7px;background:#555"></div>
<span class="rl" style="left:478px;width:40px;text-align:center;top:0px">90</span>
<div style="left:497.5px;top:16px;width:1px;height:7px;background:#555"></div>
<span class="rl" style="left:528px;width:40px;text-align:center;top:0px">100</span>
<div style="left:547.5px;top:16px;width:1px;height:7px;background:#555"></div>
<span class="rl" style="left:578px;width:40px;text-align:center;top:0px">110</span>
<div style="left:597.5px;top:16px;width:1px;height:7px;background:#555"></div>
<span class="rl" style="left:628px;width:40px;text-align:center;top:0px">120</span>
<div style="left:647.5px;top:16px;width:1px;height:7px;background:#555"></div>
<span class="rl" style="left:678px;width:40px;text-align:center;top:0px">130</span>
<div style="left:697.5px;top:16px;width:1px;height:7px;background:#555"></div>
<span class="rl" style="left:728px;width:40px;text-align:center;top:0px">140</span>
<div style="left:747.5px;top:16px;width:1px;height:7px;background:#555"></div>
<span class="rl" style="left:778px;width:40px;text-align:center;top:0px">150</span>
<div style="left:797.5px;top:16px;width:1px;height:7px;background:#555"></div>
<span class="rl" style="left:828px;width:40px;text-align:center;top:0px">160</span>
<div style="left:847.5px;top:16px;width:1px;height:7px;background:#555"></div>
<span class="rl" style="left:878px;width:40px;text-align:center;top:0px">170</span>
<div style="left:897.5px;top:16px;width:1px;height:7px;background:#555"></div>
<span class="rl" style="left:928px;width:40px;text-align:center;top:0px">180</span>
<div style="left:947.5px;top:16px;width:1px;height:7px;background:#555"></div>
<span class="rl" style="left:978px;width:40px;text-align:center;top:0px">190</span>
<div style="left:997.5px;top:16px;width:1px;height:7px;background:#555"></div>
<span class="rl" style="left:1028px;width:40px;text-align:center;top:0px">200</span>
<div style="left:1047.5px;top:16px;width:1px;height:7px;background:#555"></div>
<svg style="left:538px;top:13px" width="12" height="8" viewBox="0 0 12 8"><path d="M0 0H12L6 7z" fill="#000"/></svg>
</div>
<div class="vruler">
<div style="left:16px;top:551.5px;width:7px;height:1px;background:#555"></div>
<span class="rl" style="left:-14px;width:40px;text-align:center;top:546px;transform:rotate(-90deg) scaleX(.94)">0</span>
<div style="left:16px;top:501.5px;width:7px;height:1px;background:#555"></div>
<span class="rl" style="left:-14px;width:40px;text-align:center;top:496px;transform:rotate(-90deg) scaleX(.94)">10</span>
<div style="left:16px;top:451.5px;width:7px;height:1px;background:#555"></div>
<span class="rl" style="left:-14px;width:40px;text-align:center;top:446px;transform:rotate(-90deg) scaleX(.94)">20</span>
<div style="left:16px;top:401.5px;width:7px;height:1px;background:#555"></div>
<span class="rl" style="left:-14px;width:40px;text-align:center;top:396px;transform:rotate(-90deg) scaleX(.94)">30</span>
<div style="left:16px;top:351.5px;width:7px;height:1px;background:#555"></div>
<span class="rl" style="left:-14px;width:40px;text-align:center;top:346px;transform:rotate(-90deg) scaleX(.94)">40</span>
<div style="left:16px;top:301.5px;width:7px;height:1px;background:#555"></div>
<span class="rl" style="left:-14px;width:40px;text-align:center;top:296px;transform:rotate(-90deg) scaleX(.94)">50</span>
<div style="left:16px;top:251.5px;width:7px;height:1px;background:#555"></div>
<span class="rl" style="left:-14px;width:40px;text-align:center;top:246px;transform:rotate(-90deg) scaleX(.94)">60</span>
<div style="left:16px;top:201.5px;width:7px;height:1px;background:#555"></div>
<span class="rl" style="left:-14px;width:40px;text-align:center;top:196px;transform:rotate(-90deg) scaleX(.94)">70</span>
<div style="left:16px;top:151.5px;width:7px;height:1px;background:#555"></div>
<span class="rl" style="left:-14px;width:40px;text-align:center;top:146px;transform:rotate(-90deg) scaleX(.94)">80</span>
<div style="left:16px;top:101.5px;width:7px;height:1px;background:#555"></div>
<span class="rl" style="left:-14px;width:40px;text-align:center;top:96px;transform:rotate(-90deg) scaleX(.94)">90</span>
<div style="left:16px;top:51.5px;width:7px;height:1px;background:#555"></div>
<span class="rl" style="left:-14px;width:40px;text-align:center;top:46px;transform:rotate(-90deg) scaleX(.94)">100</span>
<div style="left:16px;top:1.5px;width:7px;height:1px;background:#555"></div>
<span class="rl" style="left:-14px;width:40px;text-align:center;top:-4px;transform:rotate(-90deg) scaleX(.94)">110</span>
<svg style="left:13px;top:281px" width="8" height="12" viewBox="0 0 8 12"><path d="M0 0V12L7 6z" fill="#000"/></svg>
</div>
<div class="canvas">
<div style="left:24px;top:0;width:2px;height:577px;background:#0f0f0f"></div>
<div style="left:1024px;top:0;width:2px;height:577px;background:#0e0e0e"></div>
<div style="left:524px;top:0;width:2px;height:577px;background:#0f0f0f"></div>
<div style="left:0;top:51px;width:1043px;height:2px;background:#0f0f0f"></div>
<div style="left:0;top:551px;width:1043px;height:2px;background:#0f0f0f"></div>
<div style="left:0;top:0;width:1043px;height:577px;background-image:radial-gradient(circle at 0.5px 0.5px,#3c3c3c 0.45px,transparent 0.85px);background-size:50px 50px;background-position:25px 2px"></div>
<svg style="left:4.0px;top:531.0px" width="42" height="42" viewBox="0 0 42 42"><path d="M21 .5v41M.5 21h41" stroke="#700000" stroke-width="1.500"/><circle cx="21" cy="21" r="4.800" fill="none" stroke="#b80000" stroke-width="1"/></svg>
<svg style="left:476.0px;top:243.0px" width="90" height="90" viewBox="0 0 90 90"><defs><radialGradient id="gring" cx=".5" cy=".5" r=".5"><stop offset=".70" stop-color="#3c5163" stop-opacity="0"/><stop offset=".80" stop-color="#3c5163" stop-opacity=".5"/><stop offset=".88" stop-color="#43596c"/><stop offset=".95" stop-color="#4a6276"/><stop offset=".985" stop-color="#4a6276" stop-opacity=".7"/><stop offset="1" stop-color="#4a6276" stop-opacity="0"/></radialGradient></defs><circle cx="45" cy="45" r="40.300" fill="url(#gring)"/><g fill="none" stroke="#7390a6" stroke-width=".65"><circle cx="45" cy="45" r="32.400" opacity=".25"/><circle cx="45" cy="45" r="33.800" opacity=".4"/><circle cx="45" cy="45" r="35.200" opacity=".55"/><circle cx="45" cy="45" r="36.600" opacity=".7"/><circle cx="45" cy="45" r="38" opacity=".8"/><circle cx="45" cy="45" r="39.300" opacity=".7"/></g><path transform="translate(.4,-.4)" d="M44.300 45.200v22.300l5.100-4.800 4.300 9.900 4-1.800-4.300-9.700h7.200z" fill="#000" stroke="#fff" stroke-width="1.500" stroke-linejoin="round"/></svg>
</div>
<div style="left:1071px;top:50px;width:8px;height:411px;border-radius:4px;background:#7f7f7f"></div>
<div style="left:1011px;top:624px;width:72px;height:16px;background:#ececec"></div>
<span style="left:1013px;width:69px;text-align:right;top:625px;font-size:13px;line-height:15px;color:#111;-webkit-text-stroke:.25px #111">10 &lt; 100</span>
</div>
<div class="cmdhist"><span style="left:5px;top:2px;font-size:13.300px;line-height:16px;color:#1a00c8;white-space:nowrap"><i>Comando:</i> new</span></div>
<div class="cmdline">
<div style="left:0;top:0;width:1083px;height:1px;background:#c09c9c"></div>
<span style="left:1px;top:7px;font-size:13.5px;line-height:16px;color:#111">Comando:</span>
<div style="left:66px;top:5px;width:988px;height:18px;background:#ffd9d9"></div>
<div style="left:1055.300px;top:1.400px;width:25.400px;height:25.200px;border:1px solid #c9a3a3;background:linear-gradient(#f6d3d3,#ebc6c6)"></div>
<svg style="left:1060.6px;top:8.7px" width="16" height="12" viewBox="0 0 16 12"><rect x=".9" y=".9" width="13" height="8.800" fill="#ffdede" stroke="#2a1010" stroke-width=".9"/><rect x=".9" y=".9" width="13" height="3" fill="#1a0808"/><rect x="10.800" y="1.700" width="1.300" height="1.100" fill="#f0c8c8"/></svg>
</div>
<div class="lay">
<div class="laytitle"><span style="left:0;width:334px;text-align:center;top:4px;font-size:11.5px;line-height:14px;color:#2a1c1c;letter-spacing:.2px">Lista de capas</span></div>
<svg style="left:1.2px;top:3.0px" width="14" height="14" viewBox="0 0 14 14"><circle cx="7" cy="7" r="6.900" fill="#735050"/><path d="M4.200 4.200l5.600 5.600M9.800 4.200l-5.600 5.600" stroke="#ecc6c6" stroke-width="2" stroke-linecap="butt"/></svg>
<svg style="left:18.8px;top:3.0px" width="14" height="14" viewBox="0 0 14 14"><circle cx="7" cy="7" r="6.900" fill="#735050"/><rect x="5.600" y="3.800" width="5" height="4.200" fill="none" stroke="#ecc6c6" stroke-width="1"/><rect x="3.400" y="5.900" width="5.400" height="4.400" fill="#735050" stroke="#ecc6c6" stroke-width="1.100"/></svg>
<div class="laybtn" style="left:-1.9px"></div>
<svg style="left:19.1px;top:26.5px" width="20" height="16" viewBox="0 0 20 16"><g transform="translate(2.600,1.900) scale(.74)"><path d="M.8 8.300c3-4.600 6.200-6.200 9.200-6.200s6.200 1.600 9.200 6.200c-3 4-6.200 5.600-9.200 5.600s-6.200-1.600-9.200-5.600z" fill="#ffe6e6" stroke="#140808" stroke-width="1.900" stroke-linejoin="round"/><path d="M.8 8c3-4.800 6.200-6.400 9.200-6.400s6.200 1.600 9.200 6.400" fill="none" stroke="#140808" stroke-width="3"/><circle cx="10" cy="7.900" r="5" fill="#140808"/><path d="M7.600 6.200a3 3 0 0 0 1.600 3.400" fill="none" stroke="#ffe6e6" stroke-width=".9"/></g></svg>
<div class="laybtn" style="left:58.1px"></div>
<svg style="left:79.1px;top:26.5px" width="20" height="16" viewBox="0 0 20 16"><g opacity=".5" transform="translate(2.600,1.900) scale(.74)"><path d="M.8 8.300c3-4.600 6.200-6.200 9.200-6.200s6.200 1.600 9.200 6.200c-3 4-6.200 5.600-9.200 5.600s-6.200-1.600-9.200-5.600z" fill="#ffe6e6" stroke="#6a3a3a" stroke-width="1.900" stroke-linejoin="round"/><path d="M.8 8c3-4.800 6.200-6.400 9.200-6.400s6.200 1.600 9.200 6.400" fill="none" stroke="#6a3a3a" stroke-width="3"/><circle cx="10" cy="7.900" r="5" fill="#6a3a3a"/><path d="M7.600 6.200a3 3 0 0 0 1.600 3.400" fill="none" stroke="#ffe6e6" stroke-width=".9"/></g></svg>
<div class="laybtn" style="left:118.1px"></div>
<svg style="left:139.1px;top:26.5px" width="20" height="16" viewBox="0 0 20 16"><path d="M10 2.200v11.600M4.200 8h11.600" stroke="#ee0000" stroke-width="2.600"/></svg>
<div class="laybtn" style="left:178.1px"></div>
<svg style="left:199.1px;top:26.5px" width="20" height="16" viewBox="0 0 20 16"><path d="M4.200 8h11.600" stroke="#ee0000" stroke-width="2.600"/></svg>
<div class="laybtn" style="left:238.1px"></div>
<svg style="left:259.6px;top:26.5px" width="20" height="16" viewBox="0 0 20 16"><g transform="translate(2.300,15) rotate(-43)"><path d="M0 0l4-1.700h12.500a1.700 1.700 0 0 1 0 3.400h-12.500z" fill="#f09a28" stroke="#a86414" stroke-width=".6" stroke-linejoin="round"/><path d="M4-.500h11" stroke="#ffd38a" stroke-width=".8"/><path d="M14.800-1.700h1.700a1.700 1.700 0 0 1 0 3.400h-1.700z" fill="#e0301c"/><path d="M0 0l4-1.700v3.400z" fill="#e8c39a"/><path d="M0 0l1.800-.8v1.600z" fill="#3a2a1a"/></g></svg>
<div style="left:5px;top:55px;width:16px;height:9px;border:1px solid #000;background:#ffd9d9"></div>
<span style="left:27px;top:51px;font-size:13.500px;line-height:16px;color:#1a0808;-webkit-text-stroke:.3px #1a0808">0</span>
<svg style="left:236.0px;top:51.0px" width="20" height="16" viewBox="0 0 20 16"><g transform="translate(2.300,15) rotate(-43)"><path d="M0 0l4-1.700h12.500a1.700 1.700 0 0 1 0 3.400h-12.500z" fill="#f09a28" stroke="#a86414" stroke-width=".6" stroke-linejoin="round"/><path d="M4-.500h11" stroke="#ffd38a" stroke-width=".8"/><path d="M14.800-1.700h1.700a1.700 1.700 0 0 1 0 3.400h-1.700z" fill="#e0301c"/><path d="M0 0l4-1.700v3.400z" fill="#e8c39a"/><path d="M0 0l1.800-.8v1.600z" fill="#3a2a1a"/></g></svg>
<svg style="left:257.0px;top:51.0px" width="20" height="16" viewBox="0 0 20 16"><g transform="translate(2.600,1.900) scale(.74)"><path d="M.8 8.300c3-4.600 6.200-6.200 9.200-6.200s6.200 1.600 9.200 6.200c-3 4-6.200 5.600-9.200 5.600s-6.200-1.600-9.200-5.600z" fill="#ffe6e6" stroke="#140808" stroke-width="1.900" stroke-linejoin="round"/><path d="M.8 8c3-4.800 6.200-6.400 9.200-6.400s6.200 1.600 9.200 6.400" fill="none" stroke="#140808" stroke-width="3"/><circle cx="10" cy="7.900" r="5" fill="#140808"/><path d="M7.600 6.200a3 3 0 0 0 1.600 3.400" fill="none" stroke="#ffe6e6" stroke-width=".9"/></g></svg>
<svg style="left:279.3px;top:51.0px" width="20" height="16" viewBox="0 0 20 16"><g opacity=".5"><path d="M6.600 8v-2.800a3.400 3.400 0 0 1 6.800 0v2.800" fill="none" stroke="#8a6c6c" stroke-width="1.300"/><rect x="4.800" y="7.500" width="10.400" height="8" rx=".8" fill="#a88a8a"/></g></svg>
</div>
<div class="rtb">
<div class="griph" style="left:7.500px;top:8px;width:26px"></div>
<div class="pressed" style="left:1.400px;top:12.400px;width:42.200px;height:42px;border-radius:5px"></div>
<div class="pressed" style="left:1.200px;top:308.800px;width:41.600px;height:43px;border-radius:6px"></div>
<div class="seph" style="left:2px;top:153px;width:42px"></div>
<div class="seph" style="left:2px;top:301px;width:42px"></div>
<svg style="left:8.0px;top:19.3px" width="29" height="29" viewBox="0 0 29 29"><rect x=".5" y=".5" width="27.400" height="27.400" fill="#ffd9d9" stroke="#6a4a4a" stroke-width=".8"/><rect x=".5" y=".5" width="27.400" height="4.300" fill="#160808"/><rect x="1.600" y="1.300" width="2.800" height="2.800" fill="#fff0f0"/><g stroke="#6a4a4a" stroke-width=".8" fill="#e9c3c3"><path d="M7 11l7-2.500v12l-7 2.500z"/><path d="M9.500 10.200l7-2.500v12l-7 2.500z"/><path d="M12 9.500l8-2.800v12.500l-8 2.800z" fill="#fbe0e0"/></g><path d="M14.500 18.500l3.500-7v6z" fill="none" stroke="#e03030" stroke-width=".8"/></svg>
<svg style="left:8.0px;top:65.6px" width="29" height="29" viewBox="0 0 29 29"><rect x=".5" y=".5" width="27.400" height="27.400" fill="#ffd9d9" stroke="#6a4a4a" stroke-width=".8"/><rect x=".5" y=".5" width="27.400" height="4.300" fill="#160808"/><rect x="1.600" y="1.300" width="2.800" height="2.800" fill="#fff0f0"/><rect x="7" y="10" width="10.500" height="7.300" fill="#f3cba6" stroke="#5a3a2a" stroke-width=".8"/><circle cx="16.300" cy="16.800" r="4.400" fill="#f3cba6" fill-opacity=".8" stroke="#5a3a2a" stroke-width=".8"/></svg>
<svg style="left:8.0px;top:111.5px" width="29" height="29" viewBox="0 0 29 29"><rect x=".5" y=".5" width="27.400" height="27.400" fill="#ffd9d9" stroke="#6a4a4a" stroke-width=".8"/><rect x=".5" y=".5" width="27.400" height="4.300" fill="#160808"/><rect x="1.600" y="1.300" width="2.800" height="2.800" fill="#fff0f0"/><rect x="5.500" y="10.300" width="16.500" height="10.700" rx="2" fill="#fbdcde" stroke="#c9b6d4" stroke-width="1"/></svg>
<svg style="left:8.0px;top:168.4px" width="29" height="29" viewBox="0 0 29 29"><rect x=".5" y=".5" width="27.400" height="27.400" fill="#ffd9d9" stroke="#6a4a4a" stroke-width=".8"/><rect x=".5" y=".5" width="27.400" height="4.300" fill="#160808"/><rect x="1.600" y="1.300" width="2.800" height="2.800" fill="#fff0f0"/><rect x="3.600" y="7.6" width="3.600" height="3.200" fill="#160808"/><rect x="10.200" y="7.8" width="14" height="2.900" fill="#ffe3e3" stroke="#6a4a4a" stroke-width=".7"/><rect x="3.600" y="13.5" width="3.600" height="3.200" fill="#160808"/><rect x="10.200" y="13.7" width="14" height="2.900" fill="#ffe3e3" stroke="#6a4a4a" stroke-width=".7"/><rect x="3.600" y="19.4" width="3.600" height="3.200" fill="#160808"/><rect x="10.200" y="19.6" width="14" height="2.900" fill="#ffe3e3" stroke="#6a4a4a" stroke-width=".7"/></svg>
<svg style="left:8.0px;top:214.2px" width="29" height="29" viewBox="0 0 29 29"><rect x=".5" y=".5" width="27.400" height="27.400" fill="#ffd9d9" stroke="#6a4a4a" stroke-width=".8"/><rect x=".5" y=".5" width="27.400" height="4.300" fill="#160808"/><rect x="1.600" y="1.300" width="2.800" height="2.800" fill="#fff0f0"/><defs><linearGradient id="gfu" x1="0" y1="0" x2="1" y2="0"><stop offset="0" stop-color="#d9b4b4"/><stop offset=".5" stop-color="#b99494"/><stop offset="1" stop-color="#8f6d6d"/></linearGradient></defs><path d="M7 10.500h15l-5.500 6.500v6.500l-3-1.500v-5z" fill="url(#gfu)" stroke="#7c5c5c" stroke-width=".7" stroke-linejoin="round"/><ellipse cx="14.500" cy="10.500" rx="7.500" ry="1.700" fill="#e9c9c9" stroke="#7c5c5c" stroke-width=".7"/></svg>
<svg style="left:8.0px;top:260.2px" width="29" height="29" viewBox="0 0 29 29"><rect x=".5" y=".5" width="27.400" height="27.400" fill="#ffd9d9" stroke="#6a4a4a" stroke-width=".8"/><rect x=".5" y=".5" width="27.400" height="4.300" fill="#160808"/><rect x="1.600" y="1.300" width="2.800" height="2.800" fill="#fff0f0"/><path d="M7.500 9l4.500 3.500v7l-4.500 3.500z" fill="#f6dada" stroke="#4a3030" stroke-width=".9" stroke-linejoin="round"/><rect x="12" y="12.500" width="9.500" height="7" fill="#7a5a5a" stroke="#4a3030" stroke-width=".7"/><path d="M14 12.500v7M16 12.500v7M18 12.500v7M20 12.500v7" stroke="#b79a9a" stroke-width=".6"/><path d="M5 16h19" stroke="#ee6a6a" stroke-width=".7"/></svg>
<svg style="left:8.0px;top:316.1px" width="29" height="29" viewBox="0 0 29 29"><rect x=".5" y=".5" width="27.400" height="27.400" fill="#ffd9d9" stroke="#6a4a4a" stroke-width=".8"/><rect x=".5" y=".5" width="27.400" height="4.300" fill="#160808"/><rect x="1.600" y="1.300" width="2.800" height="2.800" fill="#fff0f0"/><g font-family="Liberation Sans, sans-serif" font-size="3.300" fill="#5e4242" text-rendering="geometricPrecision"><text x="2.200" y="9" textLength="14.400" lengthAdjust="spacingAndGlyphs">Command: line</text><text x="2.200" y="12.300" textLength="14" lengthAdjust="spacingAndGlyphs">Command: line</text><text x="2.200" y="15.600" textLength="16.400" lengthAdjust="spacingAndGlyphs">Command: circle</text><text x="2.200" y="19" textLength="17" lengthAdjust="spacingAndGlyphs">Command: spline</text></g><rect x=".9" y="21.600" width="26.600" height="5.900" fill="#ffe9e9" stroke="#6a4a4a" stroke-width=".5"/><g font-family="Liberation Sans, sans-serif" font-size="4" fill="#2a1818" text-rendering="geometricPrecision"><text x="2.200" y="26">C</text><text x="9" y="26" textLength="15.500" lengthAdjust="spacingAndGlyphs">command</text></g></svg>
<svg style="left:8.0px;top:363.1px" width="29" height="29" viewBox="0 0 29 29"><rect x=".5" y=".5" width="27.400" height="27.400" fill="#ffd9d9" stroke="#6a4a4a" stroke-width=".8"/><rect x=".5" y=".5" width="27.400" height="4.300" fill="#160808"/><rect x="1.600" y="1.300" width="2.800" height="2.800" fill="#fff0f0"/><rect x="7.500" y="9.300" width="13" height="15" rx="1" fill="#c9741f" stroke="#8d4d12" stroke-width=".7"/><rect x="9" y="11" width="10" height="12" fill="#f3d3d3"/><path d="M10.500 14h7M10.500 16h7M10.500 18h7M10.500 20h4" stroke="#cfa8a8" stroke-width=".7"/><path d="M11.500 10.500l.6-2h3.800l.6 2z" fill="#b79a92" stroke="#7d625c" stroke-width=".6"/><path d="M19 19.500v3.500h-3.500z" fill="#9d8686"/></svg>
</div>
<div class="status">
<span style="left:2px;top:8.5px">99.2,52.8</span>
<span style="left:2px;top:29px">@99.2,52.8</span>
<div style="left:253px;top:3px;width:1px;height:40px;background:#8d6f6f"></div>
<span style="left:256px;top:8.5px">112.3765&lt;28°</span>
<span style="left:256px;top:29px">@112.3765&lt;28°</span>
<span style="left:569px;top:18.500px">Seleccionar entidad o región</span>
<span style="left:949px;top:18.500px">No hay entidades seleccionadas.</span>
<div style="left:506px;top:21px;width:6px;height:6px;border-radius:3px;background:#d2abab"></div>
<div style="left:940px;top:21px;width:6px;height:6px;border-radius:3px;background:#d2abab"></div>
<div style="left:1269px;top:21px;width:6px;height:6px;border-radius:3px;background:#d2abab"></div>
<svg style="left:716.0px;top:6.1px" width="20" height="34" viewBox="0 0 20 34"><rect x="1.400" y="1.700" width="17" height="29.300" rx="8.500" fill="#ffdcdc" stroke="#5a3636" stroke-width="1"/><path d="M1.400 15.300Q10 12.900 18.400 15.300" fill="none" stroke="#5a3636" stroke-width="1.200"/><path d="M10 1.700v1.800M10 11v3" stroke="#5a3636" stroke-width="1.100"/><rect x="8.300" y="3.500" width="3.400" height="7.600" rx="1.700" fill="#ffdcdc" stroke="#5a3636" stroke-width="1"/></svg>
</div>
<div style="left:0px;top:23px;width:1500px;height:2px;background:linear-gradient(rgba(255,0,0,.31) 50%,rgba(255,0,0,.34) 50%);"></div>
<div style="left:0px;top:68px;width:1500px;height:2px;background:linear-gradient(rgba(210,5,5,.6) 50%,rgba(240,0,0,.45) 50%);"></div>
<div style="left:0px;top:107px;width:1500px;height:2px;background:linear-gradient(rgba(210,5,5,.6) 50%,rgba(240,0,0,.45) 50%);"></div>
<div style="left:0px;top:798px;width:1500px;height:2px;background:linear-gradient(rgba(210,5,5,.6) 50%,rgba(240,0,0,.45) 50%);"></div>
<div style="left:63px;top:748px;width:1102px;height:2px;background:linear-gradient(rgba(210,5,5,.6) 50%,rgba(240,0,0,.45) 50%);-webkit-mask-image:linear-gradient(90deg,transparent,#000 9px,#000 calc(100% - 9px),transparent);mask-image:linear-gradient(90deg,transparent,#000 9px,#000 calc(100% - 9px),transparent);"></div>
<div style="left:0;top:843px;width:1500px;height:1px;background:#ee6868"></div>
<div style="left:0;top:14px;width:1px;height:830px;background:#f38484;-webkit-mask-image:linear-gradient(transparent,#000 10px);mask-image:linear-gradient(transparent,#000 10px);"></div>
<div style="left:1499px;top:14px;width:1px;height:830px;background:#e06464;-webkit-mask-image:linear-gradient(transparent,#000 10px);mask-image:linear-gradient(transparent,#000 10px);"></div>
<div style="left:80px;top:14px;width:2px;height:64px;background:linear-gradient(90deg,rgba(255,0,0,.5) 50%,rgba(255,0,0,.5) 50%);-webkit-mask-image:linear-gradient(transparent,#000 10px,#000 calc(100% - 10px),transparent);mask-image:linear-gradient(transparent,#000 10px,#000 calc(100% - 10px),transparent);"></div>
<div style="left:395px;top:14px;width:2px;height:64px;background:linear-gradient(90deg,rgba(255,0,0,.5) 50%,rgba(255,0,0,.5) 50%);-webkit-mask-image:linear-gradient(transparent,#000 10px,#000 calc(100% - 10px),transparent);mask-image:linear-gradient(transparent,#000 10px,#000 calc(100% - 10px),transparent);"></div>
<div style="left:700px;top:14px;width:2px;height:64px;background:linear-gradient(90deg,rgba(255,0,0,.5) 50%,rgba(255,0,0,.5) 50%);-webkit-mask-image:linear-gradient(transparent,#000 10px,#000 calc(100% - 10px),transparent);mask-image:linear-gradient(transparent,#000 10px,#000 calc(100% - 10px),transparent);"></div>
<div style="left:71px;top:98px;width:2px;height:712px;background:linear-gradient(90deg,rgba(200,50,50,.3) 50%,rgba(245,20,20,.55) 50%);-webkit-mask-image:linear-gradient(transparent,#000 10px,#000 calc(100% - 10px),transparent);mask-image:linear-gradient(transparent,#000 10px,#000 calc(100% - 10px),transparent);"></div>
<div style="left:1154px;top:98px;width:2px;height:712px;background:linear-gradient(90deg,rgba(210,5,5,.6) 50%,rgba(240,0,0,.45) 50%);-webkit-mask-image:linear-gradient(transparent,#000 10px,#000 calc(100% - 10px),transparent);mask-image:linear-gradient(transparent,#000 10px,#000 calc(100% - 10px),transparent);"></div>
<div style="left:1454px;top:98px;width:2px;height:712px;background:linear-gradient(90deg,rgba(210,5,5,.6) 50%,rgba(240,0,0,.45) 50%);-webkit-mask-image:linear-gradient(transparent,#000 10px,#000 calc(100% - 10px),transparent);mask-image:linear-gradient(transparent,#000 10px,#000 calc(100% - 10px),transparent);"></div>
</div></body></html>
